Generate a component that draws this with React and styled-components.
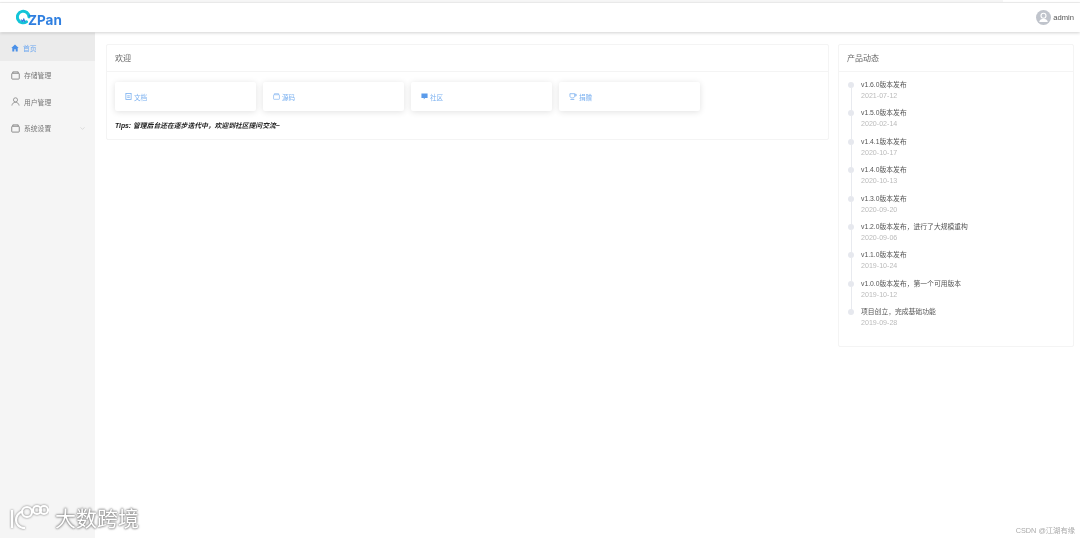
import React from "react";
import styled, { createGlobalStyle } from "styled-components";
import { ChevronDown } from "lucide-react";

const GlobalStyle = createGlobalStyle`
  html, body {
    margin: 0;
    padding: 0;
    background: #fff;
    font-family: "Liberation Sans", "Noto Sans CJK SC", sans-serif;
  }
  * { box-sizing: border-box; }
`;

const Page = styled.div`
  width: 1080px;
  height: 538px;
  position: relative;
  overflow: hidden;
  background: #fff;
  display: flex;
  flex-direction: column;
  filter: blur(0.3px);
`;

const TopStrip = styled.div`
  height: 3px;
  flex: none;
  padding-left: 60px;
  padding-right: 77px;
  border-bottom: 1px solid #f0f0f0;
`;

const StripFill = styled.div`
  height: 2px;
  background: #f6f6f6;
`;

const Header = styled.header`
  height: 29px;
  flex: none;
  display: flex;
  align-items: center;
  justify-content: space-between;
  padding: 0 6px 0 16px;
  background: #fff;
  box-shadow: 0 1px 3px rgba(0, 0, 0, 0.18);
  position: relative;
  z-index: 1;
`;

const Logo = styled.div`
  display: flex;
  align-items: center;
`;

const LogoText = styled.span`
  font-family: "Inter", sans-serif;
  font-size: 13.5px;
  font-weight: 700;
  color: #2f7fe0;
  margin: 4px 0 0 -3px;
`;

const UserBox = styled.div`
  display: flex;
  align-items: center;
  gap: 2px;
  font-size: 7.6px;
  color: #555;
  padding-bottom: 1px;
`;

const Body = styled.div`
  flex: 1;
  display: flex;
  min-height: 0;
`;

const Sidebar = styled.aside`
  width: 95px;
  flex: none;
  background: #f5f5f5;
  padding-top: 1px;
`;

const MenuItem = styled.div`
  height: ${(p) => (p.$active ? "28px" : "26.7px")};
  display: flex;
  align-items: center;
  gap: 4px;
  padding: 1.5px 9px 0 11px;
  font-size: 6.8px;
  color: ${(p) => (p.$active ? "#6aa6f0" : "#777")};
  background: ${(p) => (p.$active ? "#ebebeb" : "transparent")};
`;

const MenuLabel = styled.span`
  flex: 1;
`;

const Main = styled.main`
  flex: 1;
  display: flex;
  align-items: flex-start;
  gap: 9px;
  padding: 12px 6px 0 11px;
`;

const Card = styled.section`
  background: #fff;
  border: 1px solid #f4f4f4;
  border-radius: 2px;
  flex: none;
  width: ${(p) => p.$width}px;
  height: ${(p) => p.$height}px;
`;

const CardTitle = styled.div`
  height: 27px;
  display: flex;
  align-items: center;
  padding: 0 0 2px 8px;
  font-size: 8px;
  color: #666;
  border-bottom: 1px solid #f4f4f4;
`;

const WelcomeBody = styled.div`
  padding: 10px 8px;
`;

const LinkRow = styled.div`
  display: flex;
  gap: 7px;
`;

const LinkBox = styled.a`
  width: 141px;
  height: 29px;
  display: flex;
  align-items: center;
  gap: 2px;
  padding-left: 10px;
  font-size: 6.6px;
  color: #7ab0f0;
  background: #fff;
  border-radius: 2px;
  box-shadow: 0 1px 6px rgba(0, 0, 0, 0.12);
`;

const Tips = styled.p`
  margin: 10px 0 0;
  font-size: 6.8px;
  font-weight: 700;
  font-style: italic;
  color: #222;
  line-height: 10px;
`;

const Timeline = styled.ul`
  list-style: none;
  margin: 0;
  padding: 8px 0 0 9px;
`;

const TimelineItem = styled.li`
  position: relative;
  height: 28.4px;
  padding-left: 13px;

  &::before {
    content: "";
    position: absolute;
    left: 0;
    top: 2px;
    width: 6px;
    height: 6px;
    border-radius: 50%;
    background: #e6e8ee;
  }

  &:not(:last-child)::after {
    content: "";
    position: absolute;
    left: 2.5px;
    top: 8px;
    width: 1px;
    height: 23px;
    background: #e8eaef;
  }
`;

const ItemTitle = styled.div`
  font-size: 6.8px;
  line-height: 10px;
  color: #555;
`;

const ItemDate = styled.div`
  font-size: 7.1px;
  line-height: 10px;
  margin-top: 1px;
  color: #bbb;
`;

const Watermark = styled.div`
  position: absolute;
  left: 9px;
  bottom: 6px;
  display: flex;
  align-items: center;
  gap: 6px;
  color: #fff;
  font-size: 21px;
  text-shadow: 0 0 2px #888, 0 0 2px #888, 0 0 3px #999;
`;

const Credit = styled.div`
  position: absolute;
  right: 5px;
  bottom: 3px;
  font-size: 7.3px;
  color: #aaa;
`;

// the box with a lid used for the storage and settings menu entries and the source link
const BoxIcon = ({ size = 9, color = "#777" }) => (
  <svg width={size} height={size} viewBox="0 0 10 10" fill="none" stroke={color} strokeWidth="0.9">
    <rect x="0.8" y="2.5" width="8.4" height="6.5" rx="0.8" />
    <path d="M2 2.5V1h6v1.5" />
  </svg>
);

const UserIcon = () => (
  <svg width="9" height="9" viewBox="0 0 10 10" fill="none" stroke="#888" strokeWidth="0.9">
    <circle cx="5" cy="3.2" r="2.3" />
    <path d="M1 9.5c.3-2.4 2-3.6 4-3.6s3.700 1.200 4 3.600" />
  </svg>
);

const DocIcon = () => (
  <svg width="7" height="7" viewBox="0 0 8 8" fill="none" stroke="#7ab0f0" strokeWidth="0.9">
    <rect x="1" y="0.6" width="6" height="6.8" />
    <path d="M2.5 3.2h3M2.5 5h3" />
  </svg>
);

const ChatIcon = () => (
  <svg width="7" height="7" viewBox="0 0 8 8">
    <path d="M.5.6h7v5H4.600L3.200 7.400V5.600H.5z" fill="#5b9bea" />
  </svg>
);

const CupIcon = () => (
  <svg width="8" height="7" viewBox="0 0 9 8" fill="none" stroke="#7ab0f0" strokeWidth="0.9">
    <path d="M1 .8h5.500v2.600c0 1.400-1 2.200-2.700 2.200S1 4.800 1 3.400z" />
    <path d="M6.500 1.500h1.700v1.700H6.500M1.500 7.400h4.500" />
  </svg>
);

const menu = [
  { label: "存储管理", icon: <BoxIcon /> },
  { label: "用户管理", icon: <UserIcon /> },
  { label: "系统设置", icon: <BoxIcon />, arrow: true },
];

const links = [
  { label: "文档", icon: <DocIcon /> },
  { label: "源码", icon: <BoxIcon size={7} color="#7ab0f0" /> },
  { label: "社区", icon: <ChatIcon /> },
  { label: "捐赠", icon: <CupIcon /> },
];

const releases = [
  ["v1.6.0版本发布", "2021-07-12"],
  ["v1.5.0版本发布", "2020-02-14"],
  ["v1.4.1版本发布", "2020-10-17"],
  ["v1.4.0版本发布", "2020-10-13"],
  ["v1.3.0版本发布", "2020-09-20"],
  ["v1.2.0版本发布，进行了大规模重构", "2020-09-06"],
  ["v1.1.0版本发布", "2019-10-24"],
  ["v1.0.0版本发布，第一个可用版本", "2019-10-12"],
  ["项目创立，完成基础功能", "2019-09-28"],
];

const LogoMark = () => (
  <svg width="15" height="17" viewBox="0 0 15 17">
    <path d="M10.500 12.800A5.800 5.800 0 1 1 13 8" fill="none" stroke="#12c5d8" strokeWidth="3" strokeLinecap="round" />
    <path d="M5 10.500l1.500 2 1.300-2.400 1.300 3.200" fill="none" stroke="#2f7fe0" strokeWidth="1.100" />
  </svg>
);

const Avatar = () => (
  <svg width="15" height="15" viewBox="0 0 15 15">
    <circle cx="7.500" cy="7.500" r="7.500" fill="#c0c4cc" />
    <circle cx="7.500" cy="5.800" r="2.500" fill="none" stroke="#fff" strokeWidth="1.100" />
    <path d="M3.200 12c.4-2.200 2.200-3.200 4.300-3.200s3.900 1 4.300 3.200z" fill="#fff" />
  </svg>
);

const HomeIcon = () => (
  <svg width="8" height="8" viewBox="0 0 8 8">
    <path d="M4 .5L.3 4h1v3.500h2V5.200h1.400v2.300h2V4h1z" fill="#4a90e8" />
  </svg>
);

const WatermarkLogo = () => (
  <svg width="40" height="28" viewBox="0 0 40 28">
    <g fill="none" stroke="#fff" strokeWidth="2.200" style={{ filter: "drop-shadow(0 0 1px #777)" }}>
      <path d="M3 7v18" />
      <path d="M14 8c-5 2-7 5-7 9s3 8 9 8" />
      <circle cx="18" cy="9" r="5" />
      <circle cx="28" cy="7" r="4" />
      <circle cx="35" cy="7" r="4" />
    </g>
  </svg>
);

const App = () => (
  <Page>
    <GlobalStyle />
    <TopStrip>
      <StripFill />
    </TopStrip>
    <Header>
      <Logo>
        <LogoMark />
        <LogoText>ZPan</LogoText>
      </Logo>
      <UserBox>
        <Avatar />
        admin
      </UserBox>
    </Header>
    <Body>
      <Sidebar>
        <MenuItem $active>
          <HomeIcon />
          <MenuLabel>首页</MenuLabel>
        </MenuItem>
        {menu.map(({ label, icon, arrow }) => (
          <MenuItem key={label}>
            {icon}
            <MenuLabel>{label}</MenuLabel>
            {arrow && <ChevronDown size={7} strokeWidth={1.5} color="#bbb" />}
          </MenuItem>
        ))}
      </Sidebar>
      <Main>
        <Card $width={723} $height={96}>
          <CardTitle>欢迎</CardTitle>
          <WelcomeBody>
            <LinkRow>
              {links.map(({ label, icon }) => (
                <LinkBox key={label}>
                  {icon}
                  {label}
                </LinkBox>
              ))}
            </LinkRow>
            <Tips>Tips: 管理后台还在逐步迭代中，欢迎到社区提问交流~</Tips>
          </WelcomeBody>
        </Card>
        <Card $width={236} $height={303}>
          <CardTitle>产品动态</CardTitle>
          <Timeline>
            {releases.map(([title, date]) => (
              <TimelineItem key={date}>
                <ItemTitle>{title}</ItemTitle>
                <ItemDate>{date}</ItemDate>
              </TimelineItem>
            ))}
          </Timeline>
        </Card>
      </Main>
    </Body>
    <Watermark>
      <WatermarkLogo />
      大数跨境
    </Watermark>
    <Credit>CSDN @江湖有缘</Credit>
  </Page>
);

export default App;
